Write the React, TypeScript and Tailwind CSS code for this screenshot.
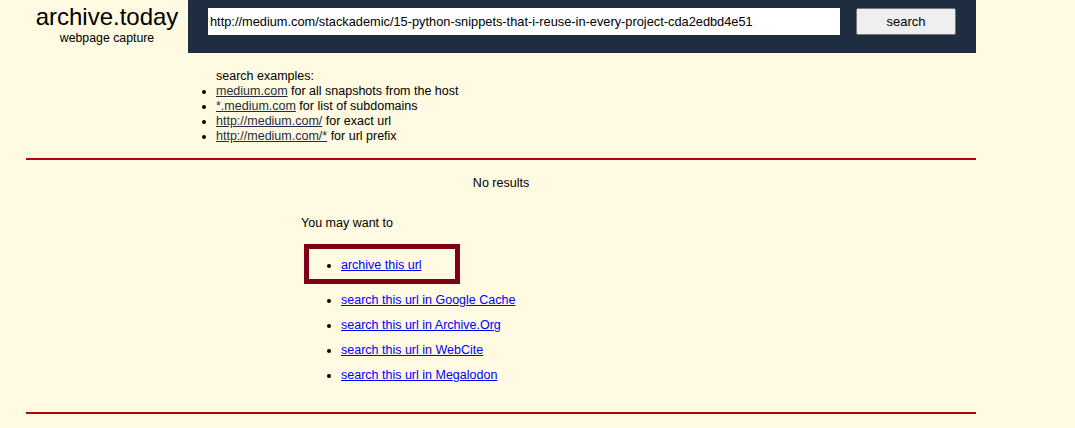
import React from 'react';

// ---------- data ----------
const EXAMPLES = [
  { link: 'medium.com', text: ' for all snapshots from the host' },
  { link: '*.medium.com', text: ' for list of subdomains' },
  { link: 'http://medium.com/', text: ' for exact url' },
  { link: 'http://medium.com/*', text: ' for url prefix' },
];

const OTHERS = [
  'search this url in Google Cache',
  'search this url in Archive.Org',
  'search this url in WebCite',
  'search this url in Megalodon',
];

const URL = 'http://medium.com/stackademic/15-python-snippets-that-i-reuse-in-every-project-cda2edbd4e51';

// ---------- component ----------
export default function App() {
  return (
    <div className="w-full min-h-[428px] bg-[#fffae1] text-black font-['Liberation_Sans',Arial,sans-serif] text-[12.5px]">
      <div className="ml-[26px] w-[950px]">

        {/* ── Header: logo + search bar ── */}
        <div className="flex h-[53px]">
          <div className="w-[162px] flex flex-col items-center pt-[3px]">
            <div className="text-[24px] leading-[28px]">archive.today</div>
            <div className="text-[12.3px] leading-[15px]">webpage capture</div>
          </div>
          <div className="flex-1 bg-[#1e2d40] flex items-start pt-[8px] pl-[20px]">
            <input
              readOnly
              value={URL}
              className="w-[632px] h-[27px] bg-white px-[2px] text-[12.8px] text-black outline-none border-0"
            />
            <button className="ml-[16px] w-[100px] h-[27px] bg-[#efefef] border border-[#767676] rounded-[2px] text-[13px] text-black">
              search
            </button>
          </div>
        </div>

        {/* ── Search examples ── */}
        <div className="pl-[190px] pt-[16px] leading-[15px]">
          <div>search examples:</div>
          <ul className="list-disc">
            {EXAMPLES.map((e) => (
              <li key={e.link}>
                <a href="#" className="underline text-[#1e2d40]">{e.link}</a>
                {e.text}
              </li>
            ))}
          </ul>
        </div>

        <div className="mt-[14px] h-[2px] bg-[#b4000f]" />

        {/* ── Results ── */}
        <div className="mt-[16px] text-center leading-[15px]">No results</div>

        <div className="mt-[25px] pl-[275px] leading-[15px]">You may want to</div>

        <div className="mt-[13px] ml-[278px] w-[156px] h-[40px] border-[5px] border-[#800018] pt-[9px]">
          <ul className="list-disc pl-[32px] leading-[15px]">
            <li>
              <a href="#" className="underline text-[#0000ff]">archive this url</a>
            </li>
          </ul>
        </div>

        <ul className="list-disc mt-[4px] pl-[315px] leading-[25px]">
          {OTHERS.map((t) => (
            <li key={t}>
              <a href="#" className="underline text-[#0000ff]">{t}</a>
            </li>
          ))}
        </ul>

        <div className="mt-[24px] h-[2px] bg-[#b4000f]" />
      </div>
    </div>
  );
}
